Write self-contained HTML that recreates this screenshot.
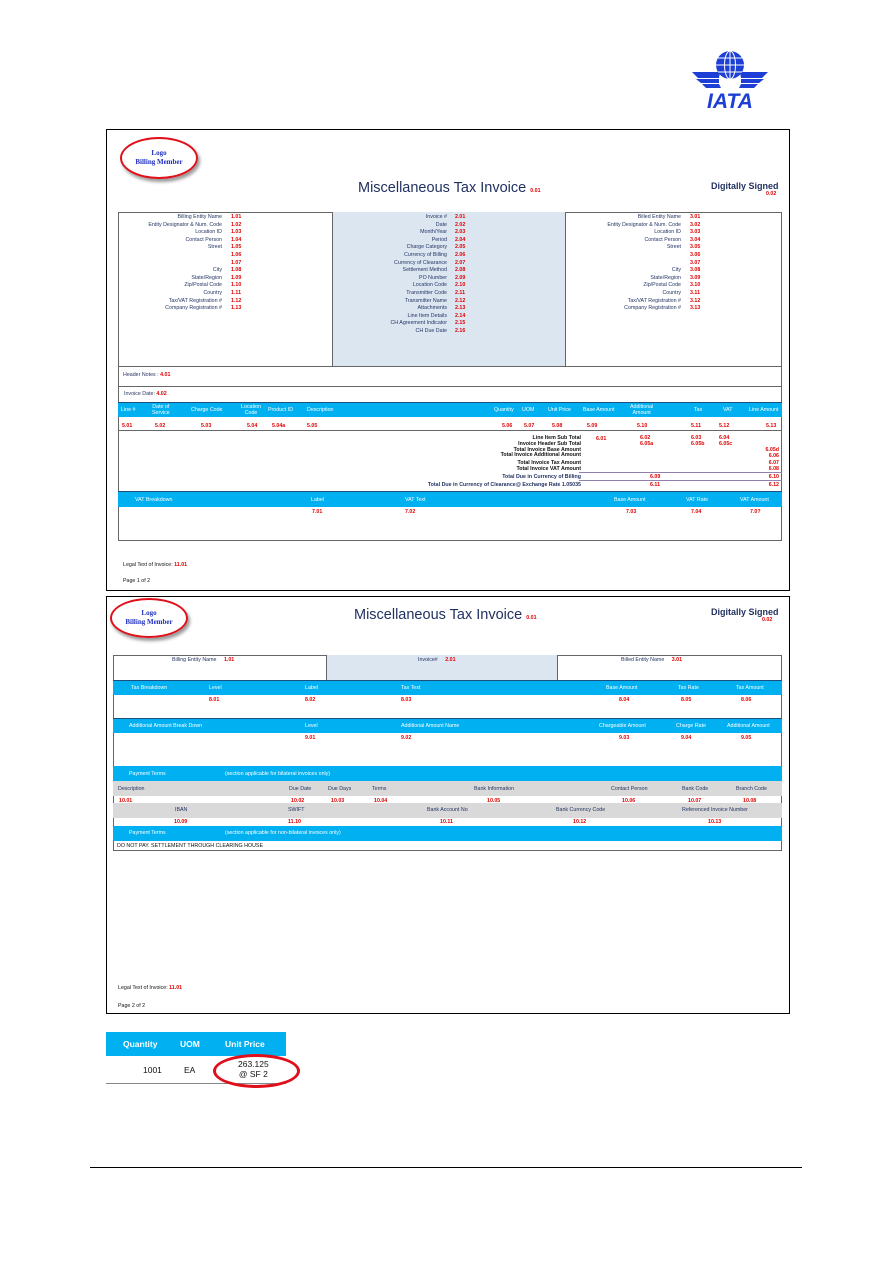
<!DOCTYPE html>
<html><head><meta charset="utf-8"><style>
*{margin:0;padding:0;box-sizing:border-box}
body{width:893px;height:1263px;background:#fff;position:relative;font-family:"Liberation Sans",Arial,sans-serif;overflow:hidden}
div,span{position:absolute}
.t{font-size:5.3px;color:#1f2f5f;white-space:nowrap;line-height:6px}
.r{font-size:5.3px;color:#e00000;font-weight:bold;white-space:nowrap;line-height:6px}
.w{font-size:5.3px;color:#fff;white-space:nowrap;line-height:6px}
.rt{text-align:right}
.frame{border:1px solid #000}
.blue{background:#00b0f0}
.gray{background:#d9d9d9}
.lb{background:#dce6f1}
.ell{border:2px solid #e0101a;border-radius:50%;box-shadow:2px 3px 3px #999;text-align:center;font-family:"Liberation Serif",serif;font-weight:bold;color:#1f2fbf;font-size:7px;line-height:9px}
.title{font-size:14.5px;color:#1f2f5f;white-space:nowrap}
.ds{font-size:9px;color:#1f2f5f;font-weight:bold;white-space:nowrap}
</style></head><body>

<svg style="position:absolute;left:690px;top:48px" width="80" height="62" viewBox="0 0 80 62">
<g fill="#1d3fd6">
<circle cx="40" cy="17" r="14"/>
<path d="M2 24 L30 24 L29 30 L8 30 Z M6 31 L29 31 L29 35 L11 35Z M12 36 L29 36 L31 40 L16 40Z"/>
<path d="M78 24 L50 24 L51 30 L72 30 Z M74 31 L51 31 L51 35 L69 35Z M68 36 L51 36 L49 40 L64 40Z"/>
</g>
<g fill="none" stroke="#fff" stroke-width="1">
<ellipse cx="40" cy="17" rx="5.5" ry="14"/><line x1="40" y1="3" x2="40" y2="31"/><line x1="26" y1="17" x2="54" y2="17"/><line x1="28" y1="10" x2="52" y2="10"/><line x1="28" y1="24" x2="52" y2="24"/>
</g>
<text x="40" y="60" text-anchor="middle" font-family="Liberation Sans" font-weight="bold" font-style="italic" font-size="21" fill="#1d3fd6">IATA</text>
</svg>

<div class="frame" style="left:106px;top:129px;width:684px;height:462px"></div>
<div class="ell" style="left:120px;top:137px;width:78px;height:42px;padding-top:10px">Logo<br>Billing Member</div>
<div class="title" style="left:358px;top:180px">Miscellaneous Tax Invoice <span class="r" style="position:static">0.01</span></div>
<div class="ds" style="left:711px;top:181px">Digitally Signed</div>
<div class="r" style="left:766px;top:191px">0.02</div>

<div style="left:118px;top:212px;width:664px;height:329px;border:1px solid #666"></div>
<div class="lb" style="left:332px;top:212px;width:234px;height:154px;border-left:1px solid #666;border-right:1px solid #666"></div>
<div style="left:118px;top:366px;width:664px;border-top:1px solid #666"></div>
<div style="left:118px;top:386px;width:664px;border-top:1px solid #666"></div>

<div class="t rt" style="right:671px;top:214px;line-height:7.6px">Billing Entity Name<br>Entity Designator &amp; Num. Code<br>Location ID<br>Contact Person<br>Street<br>&nbsp;<br>&nbsp;<br>City<br>State/Region<br>Zip/Postal Code<br>Country<br>Tax/VAT Registration #<br>Company Registration #</div>
<div class="r" style="left:231px;top:214px;line-height:7.6px">1.01<br>1.02<br>1.03<br>1.04<br>1.05<br>1.06<br>1.07<br>1.08<br>1.09<br>1.10<br>1.11<br>1.12<br>1.13</div>
<div class="t rt" style="right:446px;top:214px;line-height:7.6px">Invoice #<br>Date<br>Month/Year<br>Period<br>Charge Category<br>Currency of Billing<br>Currency of Clearance<br>Settlement Method<br>PO Number<br>Location Code<br>Transmitter Code<br>Transmitter Name<br>Attachments<br>Line Item Details<br>CH Agreement Indicator<br>CH Due Date</div>
<div class="r" style="left:455px;top:214px;line-height:7.6px">2.01<br>2.02<br>2.03<br>2.04<br>2.05<br>2.06<br>2.07<br>2.08<br>2.09<br>2.10<br>2.11<br>2.12<br>2.13<br>2.14<br>2.15<br>2.16</div>
<div class="t rt" style="right:212px;top:214px;line-height:7.6px">Billed Entity Name<br>Entity Designator &amp; Num. Code<br>Location ID<br>Contact Person<br>Street<br>&nbsp;<br>&nbsp;<br>City<br>State/Region<br>Zip/Postal Code<br>Country<br>Tax/VAT Registration #<br>Company Registration #</div>
<div class="r" style="left:690px;top:214px;line-height:7.6px">3.01<br>3.02<br>3.03<br>3.04<br>3.05<br>3.06<br>3.07<br>3.08<br>3.09<br>3.10<br>3.11<br>3.12<br>3.13</div>

<div class="t" style="left:123px;top:372px">Header Notes : <span class="r" style="position:static">4.01</span></div>
<div class="t" style="left:124px;top:391px">Invoice Date: <span class="r" style="position:static">4.02</span></div>

<div class="blue" style="left:118px;top:402px;width:664px;height:15px;border-top:1px solid #1f4f7f"></div>
<div class="w" style="left:121px;top:407px">Line #</div>
<div class="w" style="left:152px;top:404px;text-align:center">Date of<br>Service</div>
<div class="w" style="left:191px;top:407px">Charge Code</div>
<div class="w" style="left:241px;top:404px;text-align:center">Location<br>Code</div>
<div class="w" style="left:268px;top:407px">Product ID</div>
<div class="w" style="left:307px;top:407px">Description</div>
<div class="w" style="left:494px;top:407px">Quantity</div>
<div class="w" style="left:522px;top:407px">UOM</div>
<div class="w" style="left:548px;top:407px">Unit Price</div>
<div class="w" style="left:583px;top:407px">Base Amount</div>
<div class="w" style="left:630px;top:404px;text-align:center">Additional<br>Amount</div>
<div class="w" style="left:694px;top:407px">Tax</div>
<div class="w" style="left:723px;top:407px">VAT</div>
<div class="w" style="left:749px;top:407px">Line Amount</div>
<div class="r" style="left:122px;top:423px">5.01</div><div class="r" style="left:155px;top:423px">5.02</div><div class="r" style="left:201px;top:423px">5.03</div><div class="r" style="left:247px;top:423px">5.04</div><div class="r" style="left:272px;top:423px">5.04a</div><div class="r" style="left:307px;top:423px">5.05</div><div class="r" style="left:502px;top:423px">5.06</div><div class="r" style="left:524px;top:423px">5.07</div><div class="r" style="left:552px;top:423px">5.08</div><div class="r" style="left:587px;top:423px">5.09</div><div class="r" style="left:637px;top:423px">5.10</div><div class="r" style="left:691px;top:423px">5.11</div><div class="r" style="left:719px;top:423px">5.12</div><div class="r" style="left:766px;top:423px">5.13</div>
<div style="left:118px;top:430px;width:664px;border-top:1px solid #666"></div>

<div class="t rt" style="right:312px;top:436px;color:#111;font-weight:bold;line-height:5.8px">Line Item Sub Total<br>Invoice Header Sub Total<br>Total Invoice Base Amount<br>Total Invoice Additional Amount</div>
<div class="t rt" style="right:312px;top:461px;color:#111;font-weight:bold;line-height:5.8px">Total Invoice Tax Amount<br>Total Invoice VAT Amount</div>
<div class="t rt" style="right:312px;top:474px;font-weight:bold">Total Due in Currency of Billing</div>
<div class="t rt" style="right:312px;top:482px;font-weight:bold">Total Due in Currency of Clearance@ Exchange Rate 1.05035</div>
<div class="r" style="left:596px;top:436px">6.01</div><div class="r" style="left:640px;top:436px;line-height:5.8px">6.02<br>6.05a</div><div class="r" style="left:691px;top:436px;line-height:5.8px">6.03<br>6.05b</div><div class="r" style="left:719px;top:436px;line-height:5.8px">6.04<br>6.05c</div>
<div class="r rt" style="right:114px;top:448px;line-height:5.8px">6.05d<br>6.06</div>
<div class="r rt" style="right:114px;top:461px;line-height:5.8px">6.07<br>6.08</div>
<div style="left:579px;top:472px;width:203px;border-top:1.5px solid #9080b0"></div>
<div class="r" style="left:650px;top:474px">6.09</div><div class="r rt" style="right:114px;top:474px">6.10</div>
<div style="left:579px;top:480px;width:203px;border-top:1.5px solid #9080b0"></div>
<div class="r" style="left:650px;top:482px">6.11</div><div class="r rt" style="right:114px;top:482px">6.12</div>

<div class="blue" style="left:118px;top:491px;width:664px;height:16px;border-top:1px solid #1f4f7f"></div>
<div class="w" style="left:135px;top:497px">VAT Breakdown</div><div class="w" style="left:311px;top:497px">Label</div><div class="w" style="left:405px;top:497px">VAT Text</div><div class="w" style="left:614px;top:497px">Base Amount</div><div class="w" style="left:686px;top:497px">VAT Rate</div><div class="w" style="left:740px;top:497px">VAT Amount</div>
<div class="r" style="left:312px;top:509px">7.01</div><div class="r" style="left:405px;top:509px">7.02</div><div class="r" style="left:626px;top:509px">7.03</div><div class="r" style="left:691px;top:509px">7.04</div><div class="r" style="left:750px;top:509px">7.0?</div>

<div class="t" style="left:123px;top:562px;color:#111">Legal Text of Invoice: <span class="r" style="position:static">11.01</span></div>
<div class="t" style="left:123px;top:578px;color:#111">Page 1 of 2</div>

<div class="frame" style="left:106px;top:596px;width:684px;height:418px"></div>
<div class="ell" style="left:110px;top:598px;width:78px;height:40px;padding-top:9px">Logo<br>Billing Member</div>
<div class="title" style="left:354px;top:607px">Miscellaneous Tax Invoice <span class="r" style="position:static">0.01</span></div>
<div class="ds" style="left:711px;top:607px">Digitally Signed</div>
<div class="r" style="left:762px;top:617px">0.02</div>

<div style="left:113px;top:655px;width:669px;height:196px;border:1px solid #666"></div>
<div class="lb" style="left:326px;top:655px;width:232px;height:25px;border-left:1px solid #666;border-right:1px solid #666"></div>
<div class="t" style="left:172px;top:657px">Billing Entity Name <span class="r" style="position:static;margin-left:6px">1.01</span></div>
<div class="t" style="left:418px;top:657px">Invoice# <span class="r" style="position:static;margin-left:6px">2.01</span></div>
<div class="t" style="left:621px;top:657px">Billed Entity Name <span class="r" style="position:static;margin-left:6px">3.01</span></div>

<div class="blue" style="left:113px;top:680px;width:669px;height:15px;border-top:1px solid #1f4f7f"></div>
<div class="w" style="left:131px;top:685px">Tax Breakdown</div><div class="w" style="left:209px;top:685px">Level</div><div class="w" style="left:305px;top:685px">Label</div><div class="w" style="left:401px;top:685px">Tax Text</div><div class="w" style="left:606px;top:685px">Base Amount</div><div class="w" style="left:678px;top:685px">Tax Rate</div><div class="w" style="left:736px;top:685px">Tax Amount</div>
<div class="r" style="left:209px;top:697px">8.01</div><div class="r" style="left:305px;top:697px">8.02</div><div class="r" style="left:401px;top:697px">8.03</div><div class="r" style="left:619px;top:697px">8.04</div><div class="r" style="left:681px;top:697px">8.05</div><div class="r" style="left:741px;top:697px">8.06</div>

<div class="blue" style="left:113px;top:718px;width:669px;height:15px;border-top:1px solid #1f4f7f"></div>
<div class="w" style="left:129px;top:723px">Additional Amount Break Down</div><div class="w" style="left:305px;top:723px">Level</div><div class="w" style="left:401px;top:723px">Additional Amount Name</div><div class="w" style="left:599px;top:723px">Chargeable Amount</div><div class="w" style="left:676px;top:723px">Charge Rate</div><div class="w" style="left:727px;top:723px">Additional Amount</div>
<div class="r" style="left:305px;top:735px">9.01</div><div class="r" style="left:401px;top:735px">9.02</div><div class="r" style="left:619px;top:735px">9.03</div><div class="r" style="left:681px;top:735px">9.04</div><div class="r" style="left:741px;top:735px">9.05</div>

<div class="blue" style="left:113px;top:766px;width:669px;height:15px"></div>
<div class="w" style="left:129px;top:771px">Payment Terms</div><div class="w" style="left:225px;top:771px">(section applicable for bilateral invoices only)</div>
<div class="gray" style="left:113px;top:781px;width:669px;height:15px"></div>
<div class="t" style="left:118px;top:786px">Description</div><div class="t" style="left:289px;top:786px">Due Date</div><div class="t" style="left:328px;top:786px">Due Days</div><div class="t" style="left:372px;top:786px">Terms</div><div class="t" style="left:474px;top:786px">Bank Information</div><div class="t" style="left:611px;top:786px">Contact Person</div><div class="t" style="left:682px;top:786px">Bank Code</div><div class="t" style="left:736px;top:786px">Branch Code</div>
<div class="r" style="left:119px;top:798px">10.01</div><div class="r" style="left:291px;top:798px">10.02</div><div class="r" style="left:331px;top:798px">10.03</div><div class="r" style="left:374px;top:798px">10.04</div><div class="r" style="left:487px;top:798px">10.05</div><div class="r" style="left:622px;top:798px">10.06</div><div class="r" style="left:688px;top:798px">10.07</div><div class="r" style="left:743px;top:798px">10.08</div>
<div class="gray" style="left:113px;top:803px;width:669px;height:15px"></div>
<div class="t" style="left:175px;top:807px">IBAN</div><div class="t" style="left:288px;top:807px">SWIFT</div><div class="t" style="left:427px;top:807px">Bank Account No</div><div class="t" style="left:556px;top:807px">Bank Currency Code</div><div class="t" style="left:682px;top:807px">Referenced Invoice Number</div>
<div class="r" style="left:174px;top:819px">10.09</div><div class="r" style="left:288px;top:819px">11.10</div><div class="r" style="left:440px;top:819px">10.11</div><div class="r" style="left:573px;top:819px">10.12</div><div class="r" style="left:708px;top:819px">10.13</div>
<div class="blue" style="left:113px;top:826px;width:669px;height:15px"></div>
<div class="w" style="left:129px;top:830px">Payment Terms</div><div class="w" style="left:225px;top:830px">(section applicable for non-bilateral invoices only)</div>
<div class="t" style="left:117px;top:843px;color:#111">DO NOT PAY. SETTLEMENT THROUGH CLEARING HOUSE</div>

<div class="t" style="left:118px;top:985px;color:#111">Legal Text of Invoice: <span class="r" style="position:static">11.01</span></div>
<div class="t" style="left:118px;top:1003px;color:#111">Page 2 of 2</div>

<div class="blue" style="left:106px;top:1032px;width:180px;height:24px"></div>
<div style="left:123px;top:1039px;color:#fff;font-size:8.5px;font-weight:bold">Quantity</div>
<div style="left:180px;top:1039px;color:#fff;font-size:8.5px;font-weight:bold">UOM</div>
<div style="left:225px;top:1039px;color:#fff;font-size:8.5px;font-weight:bold">Unit Price</div>
<div style="left:106px;top:1083px;width:180px;border-top:1px solid #888"></div>
<div style="left:143px;top:1065px;font-size:8.5px;color:#111">1001</div>
<div style="left:184px;top:1065px;font-size:8.5px;color:#111">EA</div>
<div style="left:213px;top:1054px;width:87px;height:34px;border:3px solid #e0101a;border-radius:50%"></div>
<div style="left:238px;top:1060px;font-size:8.5px;color:#111;text-align:center;line-height:9.5px">263.125<br>@ SF 2</div>

<div style="left:90px;top:1167px;width:712px;border-top:1px solid #000"></div>
</body></html>
